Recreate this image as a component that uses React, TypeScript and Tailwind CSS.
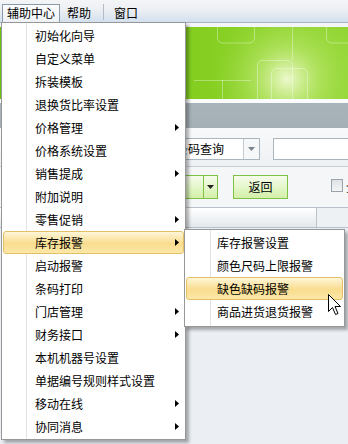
import React from "react";

// 辅助中心メニューを開いた状態の画面
// 背景（メニューバー・バナー・ツールバー）はフローで配置、ポップアップだけ absolute

type MenuItem = { label: string; sub?: boolean; active?: boolean };

const MAIN_ITEMS: MenuItem[] = [
  { label: "初始化向导" },
  { label: "自定义菜单" },
  { label: "拆装模板" },
  { label: "退换货比率设置" },
  { label: "价格管理", sub: true },
  { label: "价格系统设置" },
  { label: "销售提成", sub: true },
  { label: "附加说明" },
  { label: "零售促销", sub: true },
  { label: "库存报警", sub: true, active: true },
  { label: "启动报警" },
  { label: "条码打印" },
  { label: "门店管理", sub: true },
  { label: "财务接口", sub: true },
  { label: "本机机器号设置" },
  { label: "单据编号规则样式设置" },
  { label: "移动在线", sub: true },
  { label: "协同消息", sub: true },
];

const SUB_ITEMS: MenuItem[] = [
  { label: "库存报警设置" },
  { label: "颜色尺码上限报警" },
  { label: "缺色缺码报警", active: true },
  { label: "商品进货退货报警" },
];

const FONT = "font-['SimSun','Noto_Sans_CJK_SC',sans-serif]";

// 右向きの黒三角（サブメニューあり）
function SubArrow() {
  return (
    <svg width="4" height="7" viewBox="0 0 4 7" className="block">
      <path d="M0 0 L4 3.5 L0 7 Z" fill="#000" />
    </svg>
  );
}

function MenuRow({ item, textPad }: { item: MenuItem; textPad: string }) {
  return (
    <div
      className={`mx-[1px] h-[23px] flex items-center justify-between pr-[4px] rounded-[3px] border ${
        item.active
          ? "border-[#e3c066] bg-[linear-gradient(to_bottom,#fff6d9,#f9dc8e_55%,#fce8a8)]"
          : "border-transparent"
      } ${textPad}`}
    >
      <span className="text-[12px] leading-[12px] text-black whitespace-nowrap">{item.label}</span>
      {item.sub && <SubArrow />}
    </div>
  );
}

function Banner() {
  return (
    <div className="h-[72px] bg-[linear-gradient(to_right,#6cc20c,#86cf22_60%,#93d735)]">
      <svg width="348" height="72" viewBox="0 0 348 72" className="block">
        <defs>
          <radialGradient id="glow" cx="287" cy="52" r="75" gradientUnits="userSpaceOnUse">
            <stop offset="0" stopColor="#f2fbd6" stopOpacity="0.95" />
            <stop offset="0.45" stopColor="#c8ec80" stopOpacity="0.5" />
            <stop offset="1" stopColor="#a6dc4a" stopOpacity="0" />
          </radialGradient>
        </defs>
        <rect x="0" y="0" width="348" height="72" fill="url(#glow)" />
        <g fill="none" stroke="#ffffff" strokeOpacity="0.35" strokeWidth="1">
          <rect x="217.5" y="-10" width="37" height="26" rx="5" />
          <rect x="326.5" y="-10" width="40" height="26" rx="5" />
          <line x1="292.5" y1="0" x2="292.5" y2="33" />
          <rect x="257.5" y="33.5" width="35" height="50" rx="5" />
          <rect x="271.5" y="41.5" width="36" height="40" rx="5" />
          <line x1="194" y1="53.5" x2="251" y2="53.5" />
          <line x1="222.5" y1="53" x2="222.5" y2="72" />
        </g>
      </svg>
    </div>
  );
}

export default function App() {
  return (
    <div className={`relative w-[348px] h-[444px] overflow-hidden bg-[#ebeff3] ${FONT}`}>
      {/* メニューバー */}
      <div className="h-[22px] flex items-end bg-[linear-gradient(to_bottom,#f4f5f7,#eceff3_45%,#d3e0ee)] text-[12px] text-black">
        <div className="shrink-0 ml-[2px] w-[58px] h-[18px] border border-b-0 border-[#8c99a8] bg-[linear-gradient(to_bottom,#fbfcfd,#eef2f6)] flex items-center pl-[4px] pb-[1px]">
          辅助中心
        </div>
        <div className="shrink-0 h-[18px] flex items-center pb-[1px] ml-[7px]">帮助</div>
        <div className="shrink-0 h-[16px] w-[1px] bg-[#b3bcc6] ml-[12px] mb-[2px]" />
        <div className="shrink-0 h-[18px] flex items-center pb-[1px] ml-[10px]">窗口</div>
      </div>
      <div className="h-[1px] bg-[#a7b3c0]" />
      <div className="h-[4px] bg-[#f3f5f7]" />
      <Banner />
      <div className="h-[4px] bg-[#fafbfc]" />
      <div className="h-[25px] bg-[linear-gradient(to_bottom,#a9b3ba,#a5afb6)]" />

      {/* ツールバー1 */}
      <div className="h-[39px] border-b border-[#c5cdd5] bg-[linear-gradient(to_bottom,#f8f9fa,#eef1f4)] flex items-start pt-[10px] pl-[174px] text-[12px] overflow-hidden">
        <div className="shrink-0 w-[86px] h-[22px] border border-[#abb5bd] bg-white flex items-center">
          <span className="flex-1 pl-[1px] whitespace-nowrap">条码查询</span>
          <div className="w-[16px] h-full border-l border-[#c3cad0] bg-[#f6f7f8] flex items-center justify-center">
            <svg width="7" height="4" viewBox="0 0 7 4" className="block">
              <path d="M0 0 L7 0 L3.5 4 Z" fill="#7a838b" />
            </svg>
          </div>
        </div>
        <div className="shrink-0 ml-[13px] w-[90px] h-[22px] border border-[#abb5bd] bg-white" />
      </div>

      {/* ツールバー2 */}
      <div className="h-[40px] bg-[#f4f6f8] flex items-start pt-[8px] pl-[150px] text-[12px] overflow-hidden">
        <div className="shrink-0 w-[68px] h-[24px] border border-[#7dc244] bg-[linear-gradient(to_bottom,#f6fcec,#d3f0a8)] flex">
          <div className="flex-1 border-r border-[#7dc244]" />
          <div className="w-[13px] flex items-center justify-center">
            <svg width="7" height="4" viewBox="0 0 7 4" className="block">
              <path d="M0 0 L7 0 L3.5 4 Z" fill="#222" />
            </svg>
          </div>
        </div>
        <div className="shrink-0 ml-[15px] w-[55px] h-[24px] border border-[#7dc244] bg-[linear-gradient(to_bottom,#f6fcec,#d3f0a8)] flex items-center justify-center">
          返回
        </div>
        <div className="shrink-0 ml-[43px] mt-[4px] w-[12px] h-[13px] border border-[#9aa3ab] bg-[linear-gradient(to_bottom,#dfe3e6,#f3f4f5)]" />
        <span className="shrink-0 ml-[3px] mt-[3px] whitespace-nowrap">全部</span>
      </div>

      {/* 表ヘッダ */}
      <div className="h-[21px] border-t border-b border-[#b9c2ca] bg-[linear-gradient(to_bottom,#ffffff,#e3e8ec)] flex">
        <div className="shrink-0 w-[317px] border-r border-[#b9c2ca]" />
        <div className="flex-1 bg-[#eef1f3]" />
      </div>

      {/* 主メニュー */}
      <div className="absolute left-[1px] top-[22px] w-[185px] h-[418px] border border-[#979797] bg-[linear-gradient(to_right,#ffffff_24px,#e2e3e3_24px,#e2e3e3_25px,#ffffff_25px)] shadow-[3px_3px_3px_rgba(0,0,0,0.3)] pt-[1px]">
        {MAIN_ITEMS.map((item) => (
          <MenuRow key={item.label} item={item} textPad="pl-[31px]" />
        ))}
      </div>

      {/* サブメニュー */}
      <div className="absolute left-[184px] top-[229px] w-[161px] h-[98px] border border-[#979797] bg-[linear-gradient(to_right,#ffffff_25px,#e2e3e3_25px,#e2e3e3_26px,#ffffff_26px)] shadow-[3px_3px_3px_rgba(0,0,0,0.3)] pt-[1px]">
        {SUB_ITEMS.map((item) => (
          <MenuRow key={item.label} item={item} textPad="pl-[30px]" />
        ))}
      </div>

      {/* マウスカーソル */}
      <svg width="15" height="24" viewBox="0 0 15 24" className="absolute left-[327px] top-[293px]">
        <path
          d="M1.5 1.5 L1.5 18.5 L5.5 14.5 L8.5 21.5 L11 20.5 L8 13.5 L13.5 13.5 Z"
          fill="#fff"
          stroke="#000"
          strokeWidth="1"
          strokeLinejoin="miter"
        />
      </svg>
    </div>
  );
}
